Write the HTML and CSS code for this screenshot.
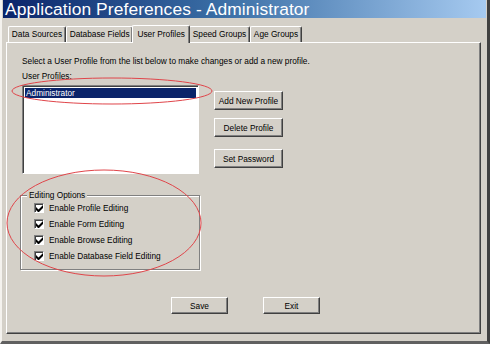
FILE: index.html
```html
<!DOCTYPE html>
<html>
<head>
  <title>Application Preferences - Administrator</title>
  <link rel="stylesheet" href="styles.css">
</head>
<body>
  <div class="window">
    <div class="titlebar">Application Preferences - Administrator</div>

    <!-- Tab strip -->
    <div class="tabs">
      <div class="tab">Data Sources</div>
      <div class="tab">Database Fields</div>
      <div class="tab active">User Profiles</div>
      <div class="tab">Speed Groups</div>
      <div class="tab">Age Groups</div>
    </div>

    <!-- Tab page -->
    <div class="panel">
      <p class="intro">Select a User Profile from the list below to make changes or add a new profile.</p>
      <div class="caption">User Profiles:</div>

      <div class="profile-row">
        <div class="listbox">
          <div class="item selected">Administrator</div>
        </div>
        <div class="btn-col">
          <button class="btn add">Add New Profile</button>
          <button class="btn del">Delete Profile</button>
          <button class="btn pwd">Set Password</button>
        </div>
      </div>

      <div class="group">
        <div class="group-title">Editing Options</div>
        <label class="check"><span class="box"><svg width="7" height="7" viewBox="0 0 7 7"><path d="M0 2v3l2 2h1l4-4V0L2.5 4.5z" fill="#000"/></svg></span>Enable Profile Editing</label>
        <label class="check"><span class="box"><svg width="7" height="7" viewBox="0 0 7 7"><path d="M0 2v3l2 2h1l4-4V0L2.5 4.5z" fill="#000"/></svg></span>Enable Form Editing</label>
        <label class="check"><span class="box"><svg width="7" height="7" viewBox="0 0 7 7"><path d="M0 2v3l2 2h1l4-4V0L2.5 4.5z" fill="#000"/></svg></span>Enable Browse Editing</label>
        <label class="check"><span class="box"><svg width="7" height="7" viewBox="0 0 7 7"><path d="M0 2v3l2 2h1l4-4V0L2.5 4.5z" fill="#000"/></svg></span>Enable Database Field Editing</label>
      </div>

      <div class="footer">
        <button class="btn wide">Save</button>
        <button class="btn wide">Exit</button>
      </div>
    </div>

    <!-- hand-drawn annotation marks -->
    <svg class="marks" width="490" height="344" viewBox="0 0 490 344">
      <ellipse cx="110" cy="91" rx="100" ry="13" fill="none" stroke="#e0454a" stroke-width="1"/>
      <ellipse cx="102" cy="223" rx="97" ry="53" fill="none" stroke="#e0454a" stroke-width="1"/>
    </svg>
  </div>
</body>
</html>
```

FILE: styles.css
```css
body { margin: 0; background: #d4d0c8; font-family: "Liberation Sans", Arial, sans-serif; }

.window {
  position: relative;
  width: 490px; height: 344px; box-sizing: border-box;
  background: #d4d0c8;
  border-left: 2px solid #f4f2ee;
  border-right: 3px solid #404040;
  border-bottom: 3px solid #606060;
  padding-left: 1px; padding-right: 1px;
}

.titlebar {
  height: 18px; line-height: 19px;
  padding-left: 2px;
  background: linear-gradient(to right, #0a246a, #3a6ea5 45%, #a6caf0);
  color: #fff; font-size: 17.4px; letter-spacing: 0.1px;
}

/* tabs */
.tabs { display: flex; align-items: flex-end; padding-left: 5px; margin-top: 6px; height: 18px; }
.tab {
  height: 15px; line-height: 15px; padding: 0 2.8px;
  font-size: 8.3px; color: #000;
  border-top: 1px solid #fff; border-left: 1px solid #fff;
  border-right: 1px solid #404040; border-radius: 2px 2px 0 0;
  box-shadow: inset -1px 0 0 #808080;
}
.tab.active {
  height: 17px; line-height: 17px; padding: 0 4px;
  margin: 0 -1px; position: relative; z-index: 1;
  background: #d4d0c8;
  margin-bottom: -1px;
}

.panel {
  height: 292px; box-sizing: border-box;
  margin: 0 5px 0 3px;
  border-top: 1px solid #fff; border-left: 1px solid #fff;
  border-right: 1px solid #404040; border-bottom: 1px solid #404040;
  box-shadow: inset -1px -1px 0 #808080;
  padding: 13px 0 0 15px;
  font-size: 8.3px; color: #000;
}

.intro { margin: 0; line-height: 10px; }
.caption { margin-top: 5px; line-height: 10px; }

.profile-row { display: flex; gap: 15px; margin-top: 4px; }
.listbox {
  width: 177px; height: 89px; box-sizing: border-box;
  background: #fff;
  border-top: 1px solid #808080; border-left: 1px solid #808080;
  border-right: 1px solid #fff; border-bottom: 1px solid #fff;
  box-shadow: inset 1px 1px 0 #404040;
  padding: 2px 2px 0 2px;
}
.item { height: 10px; line-height: 10px; padding-left: 1px; }
.item.selected { background: #0a246a; color: #fff; }

.btn-col { display: flex; flex-direction: column; align-items: flex-start; }
.btn {
  font-family: inherit; font-size: 8.3px; color: #000;
  width: 69px; height: 19px; padding: 0;
  background: #d4d0c8;
  border-top: 1px solid #fff; border-left: 1px solid #fff;
  border-right: 1px solid #404040; border-bottom: 1px solid #404040;
  box-shadow: inset -1px -1px 0 #808080;
}
.btn.add { margin-top: 6px; }
.btn.del { margin-top: 8px; }
.btn.pwd { margin-top: 12px; }

/* group box with etched border */
.group {
  display: flex; flex-direction: column; align-items: flex-start;
  width: 180px; height: 75px; box-sizing: border-box;
  margin: 21px 0 0 -2px; padding-top: 3px;
  border: 1px solid #808080;
  box-shadow: inset 1px 1px 0 #fff, 1px 1px 0 #fff;
}
.group-title { margin: -9px 0 0 6px; padding: 0 2px; line-height: 10px; background: #d4d0c8; }

.check { display: flex; align-items: center; height: 16px; margin-left: 13px; }
.box {
  width: 10px; height: 10px; box-sizing: border-box; margin-right: 5px;
  background: #fff;
  border-top: 1px solid #808080; border-left: 1px solid #808080;
  border-right: 1px solid #fff; border-bottom: 1px solid #fff;
  box-shadow: inset 1px 1px 0 #404040;
  display: flex; align-items: center; justify-content: center;
}
.box svg { display: block; margin: 1px 0 0 1px; }

.footer { display: flex; justify-content: center; gap: 35px; margin-top: 27px; padding-right: 11px; }
.btn.wide { width: 57px; height: 17px; }

.marks { position: absolute; left: 0; top: 0; pointer-events: none; }
```
